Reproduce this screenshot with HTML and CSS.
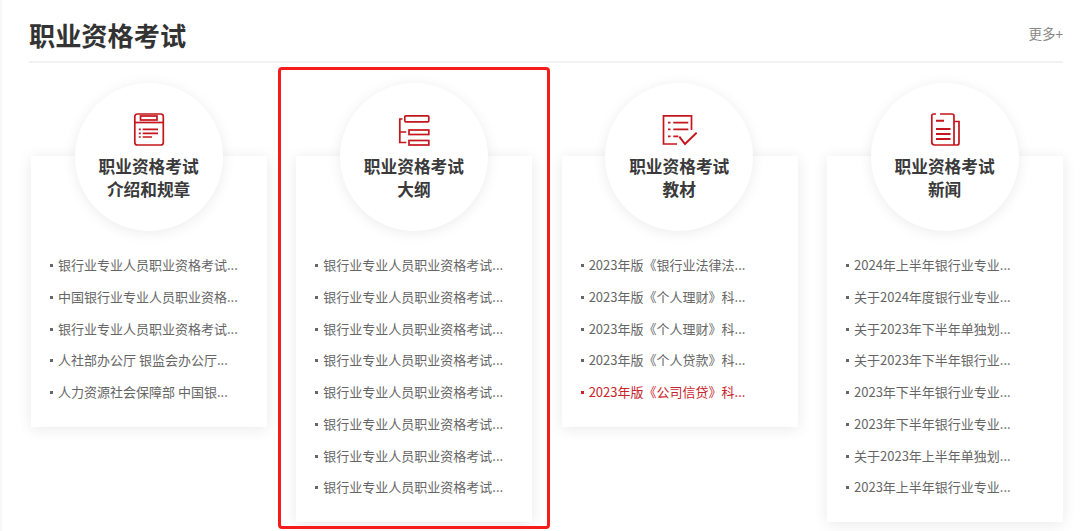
FILE: index.html
```html
<!DOCTYPE html>
<html lang="zh-CN">
<head>
<meta charset="utf-8">
<title>职业资格考试</title>
<link rel="stylesheet" href="styles.css">
</head>
<body>
<main class="page">
  <header class="head">
    <h1 class="head-title">职业资格考试</h1>
    <a class="more">更多+</a>
  </header>
  <section class="cards">
    <article class="card">
      <div class="badge">
        <svg class="icon" viewBox="0 0 36 34"><g fill="none" stroke="#c4161c" stroke-width="1.7"><rect x="3.800" y="1" width="28.500" height="31" rx="2.500"/><rect x="9.500" y="3" width="16.500" height="4"/><path d="M3.800 9.500h28.500"/><path d="M11.700 16.300h15.300M11.700 20.300h15.300M11.700 24h9.300"/><path d="M7.800 16.300h2M7.800 20.300h2M7.800 24h2"/></g></svg>
        <h2 class="badge-title">职业资格考试<br>介绍和规章</h2>
      </div>
      <ul class="list">
        <li>银行业专业人员职业资格考试...</li>
        <li>中国银行业专业人员职业资格...</li>
        <li>银行业专业人员职业资格考试...</li>
        <li>人社部办公厅 银监会办公厅...</li>
        <li>人力资源社会保障部 中国银...</li>
      </ul>
    </article>
    <article class="card">
      <div class="badge">
        <svg class="icon" viewBox="0 0 36 34"><g fill="none" stroke="#c4161c" stroke-width="1.7"><rect x="8.800" y="2.800" width="24" height="6" rx="1"/><rect x="13" y="17" width="19.800" height="4.500"/><rect x="13" y="27.500" width="19.800" height="4.500"/><path d="M6.500 6H3.800v23.500h6.500M3.800 19h6.500"/></g></svg>
        <h2 class="badge-title">职业资格考试<br>大纲</h2>
      </div>
      <ul class="list">
        <li>银行业专业人员职业资格考试...</li>
        <li>银行业专业人员职业资格考试...</li>
        <li>银行业专业人员职业资格考试...</li>
        <li>银行业专业人员职业资格考试...</li>
        <li>银行业专业人员职业资格考试...</li>
        <li>银行业专业人员职业资格考试...</li>
        <li>银行业专业人员职业资格考试...</li>
        <li>银行业专业人员职业资格考试...</li>
      </ul>
    </article>
    <article class="card">
      <div class="badge">
        <svg class="icon" viewBox="0 0 36 34"><g fill="none" stroke="#c4161c" stroke-width="1.700"><path d="M16 31H2.500V2.800H30.500V17"/><path d="M12.300 9.700h15M12.300 16.300h15M12.300 23.300h5"/><path d="M7 9.700h2.500M7 16.300h2.500M7 23.300h2.500"/><path d="M18.300 23.700l5.700 7.300 11.700-11.300" stroke-width="2"/></g></svg>
        <h2 class="badge-title">职业资格考试<br>教材</h2>
      </div>
      <ul class="list">
        <li>2023年版《银行业法律法...</li>
        <li>2023年版《个人理财》科...</li>
        <li>2023年版《个人理财》科...</li>
        <li>2023年版《个人贷款》科...</li>
        <li class="is-active">2023年版《公司信贷》科...</li>
      </ul>
    </article>
    <article class="card">
      <div class="badge">
        <svg class="icon" viewBox="0 0 36 34"><g fill="none" stroke="#c4161c" stroke-width="1.700"><path d="M9 1H6.500Q4.800 1 4.800 3V29q0 3 3 3H30q2 0 2-2V8.500h-5"/><path d="M13 1h12q2 0 2 2V32"/><path d="M9 7.700h8M9 16h14.500M9 21h14.500M9 26h14.500" stroke-width="1.900"/></g></svg>
        <h2 class="badge-title">职业资格考试<br>新闻</h2>
      </div>
      <ul class="list">
        <li>2024年上半年银行业专业...</li>
        <li>关于2024年度银行业专业...</li>
        <li>关于2023年下半年单独划...</li>
        <li>关于2023年下半年银行业...</li>
        <li>2023年下半年银行业专业...</li>
        <li>2023年下半年银行业专业...</li>
        <li>关于2023年上半年单独划...</li>
        <li>2023年上半年银行业专业...</li>
      </ul>
    </article>
  </section>
  <div class="highlight"></div>
</main>
</body>
</html>
```
FILE: styles.css
```css
* { box-sizing: border-box; }
html, body { margin: 0; height: 100%; }
body {
  background: #fff;
  overflow: hidden;
  font-family: "Noto Sans CJK SC", "Liberation Sans", sans-serif;
  color: #333;
}
.page {
  position: relative;
  height: 531px;
  padding: 0 17px 0 29px;
  box-shadow: inset 2px 0 #f8f8f8;
}
.head {
  display: flex;
  justify-content: space-between;
  align-items: flex-end;
  height: 63px;
  border-bottom: 2px solid #f2f2f2;
  padding-bottom: 7px;
}
.head-title {
  margin: 0;
  font-size: 26.2px;
  line-height: 38px;
  font-weight: 700;
  color: #333;
}
.more {
  font-size: 13.5px;
  line-height: 18px;
  color: #888;
  margin-bottom: 12px;
}
.cards {
  display: grid;
  grid-template-columns: repeat(4, 236px);
  justify-content: space-between;
  align-items: start;
  margin: 93px 0 0 2px;
}
.card {
  background: #fff;
  box-shadow: 0 2px 14px rgba(0, 0, 0, .09);
  padding-bottom: 19px;
}
.badge {
  width: 148px;
  height: 148px;
  margin: -73px 0 0 43.6px;
  padding-top: 30px;
  border-radius: 50%;
  background: #fff;
  box-shadow: 0 2px 14px rgba(0, 0, 0, .08);
  text-align: center;
}
.icon {
  display: block;
  width: 36px;
  height: 34px;
  margin: 0 auto;
}
.badge-title {
  margin: 8px 0 0;
  font-size: 16.7px;
  line-height: 23px;
  font-weight: 700;
  color: #3a3a3a;
}
.list {
  list-style: none;
  margin: 18px 0 0;
  padding: 0 0 0 19px;
}
.list li {
  position: relative;
  height: 31.75px;
  line-height: 31.75px;
  padding-left: 8px;
  font-size: 13px;
  color: #666;
  white-space: nowrap;
}
.list li::before {
  content: "";
  position: absolute;
  left: 0;
  top: 15px;
  width: 3px;
  height: 3px;
  background: #666;
}
.list .is-active { color: #c9242a; }
.list .is-active::before { background: #c9242a; }
.highlight {
  position: absolute;
  left: 278px;
  top: 67px;
  width: 272px;
  height: 462px;
  border: 3px solid #f61c1c;
  border-radius: 4px;
  pointer-events: none;
}
```
